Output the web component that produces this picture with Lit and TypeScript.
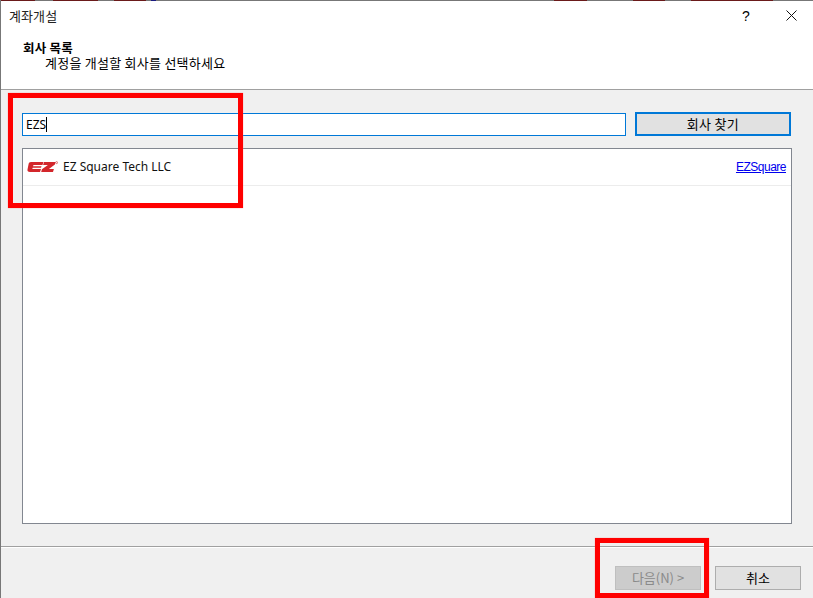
import { LitElement, html, css } from "lit";
import { customElement } from "lit/decorators.js";

@customElement("app-root")
export class AppRoot extends LitElement {
  static styles = css`
    :host { display: block; width: 813px; height: 598px; overflow: hidden; position: relative;
      font-family: "Noto Sans CJK KR", "Noto Sans", sans-serif; font-size: 13px; color: #000; }
    * { box-sizing: border-box; }
    .win { width: 813px; height: 598px; display: flex; flex-direction: column; background: #f0f0f0;
      border-left: 1px solid #777; }
    .edge { height: 1px; flex: none; background: linear-gradient(90deg,
      #6a1a1a 0 34px, #777 34px 52px, #6a1a1a 52px 97px, #777 97px 113px, #6a1a1a 113px 145px, #777 145px 150px,
      #1a1a80 150px 155px, #777 155px 553px, #6a1a1a 553px 586px, #777 586px 632px, #6a1a1a 632px 664px,
      #777 664px 690px, #6a1a1a 690px 772px, #777 772px); }
    .head { height: 89px; background: #fff; border-bottom: 1px solid #a0a0a0; display: flex; flex-direction: column; flex: none; }
    .titlebar { height: 30px; display: flex; align-items: center; padding: 0 0 1px 8px; flex: none; }
    .title { flex: 1; line-height: 28px; color: #222; letter-spacing: 0.1px; }
    .help { width: 46px; text-align: center; font: 14px "Liberation Sans", sans-serif; }
    .close { width: 44px; height: 29px; display: flex; align-items: center; justify-content: center; }
    .htxt { padding: 9px 0 0 22px; letter-spacing: 0.25px; }
    .h1 { font-weight: 700; font-size: 12.5px; line-height: 16px; }
    .h2 { padding-left: 22px; line-height: 14px; }
    .body { flex: 1; display: flex; flex-direction: column; padding: 22px 20px 22px 21px; min-height: 0; }
    .search { display: flex; gap: 9px; height: 24px; flex: none; align-items: center; }
    .input { width: 604px; height: 23px; background: #fff; border: 1px solid #0078d7; padding-left: 3px;
      display: flex; align-items: center; font-family: "Noto Sans", sans-serif; font-size: 12px; }
    .caret { width: 1px; height: 15px; background: #000; }
    .find { width: 156px; height: 24px; background: #e1e1e1; border: 2px solid #0078d7; text-align: center;
      line-height: 19px; font-size: 13px; letter-spacing: 0.3px; }
    .list { width: 770px; height: 376px; margin-top: 12px; background: #fff; border: 1px solid #828790; flex: none; }
    .row { height: 37px; border-bottom: 1px solid #ececec; display: flex; align-items: center; padding: 0 5px 1px 4px; }
    .logo { width: 31px; height: 12px; flex: none; margin-right: 5px; }
    .name { flex: 1; font-family: "Noto Sans", sans-serif; font-size: 12px; color: #111; }
    .link { color: #0000ee; text-decoration: underline; font-family: "Liberation Sans", sans-serif; font-size: 12px; letter-spacing: -0.5px; }
    .foot { height: 52px; flex: none; border-top: 1px solid #a0a0a0; box-shadow: inset 0 1px 0 #fff;
      display: flex; justify-content: flex-end; gap: 14px; padding: 19px 12px 0 0; }
    .btn { width: 86px; height: 24px; border: 1px solid #adadad; background: #e1e1e1; text-align: center;
      line-height: 21px; font-size: 13px; }
    .btn.dis { background: #cccccc; border-color: #bfbfbf; color: #8a8a8a; }
    .mark { position: absolute; border: 5px solid #ff0000; box-shadow: 0 0 1px #ff8080; pointer-events: none; }
    .m1 { left: 8px; top: 93px; width: 235px; height: 115px; }
    .m2 { left: 595px; top: 538px; width: 114px; height: 60px; }
  `;

  render() {
    return html`
      <div class="win">
        <div class="edge"></div>
        <div class="head">
          <div class="titlebar">
            <div class="title">계좌개설</div>
            <div class="help">?</div>
            <div class="close">
              <svg width="11" height="11" viewBox="0 0 11 11"><path d="M.5.5l10 10M10.5.5l-10 10" stroke="#111" stroke-width="1" fill="none"/></svg>
            </div>
          </div>
          <div class="htxt">
            <div class="h1">회사 목록</div>
            <div class="h2">계정을 개설할 회사를 선택하세요</div>
          </div>
        </div>
        <div class="body">
          <div class="search">
            <div class="input"><span>EZS</span><span class="caret"></span></div>
            <div class="find">회사 찾기</div>
          </div>
          <div class="list">
            <div class="row">
              <svg class="logo" viewBox="0 0 31 12">
                <path fill="#d3262b" d="M4 1h12.5l-1 3H6.5L6 5.2h8.5L14 6.8H5.7L5.3 8H14l-1 3H3C1 11 .2 10 .5 8.6L1.5 3.4C1.8 1.8 2.6 1 4 1z"/>
                <path fill="#d3262b" d="M17 1h11.5l-.6 2.6-6 4.4h5l-.9 3H14.2l.7-2.8 6-4.2h-4.8z"/>
                <circle cx="29.6" cy="1.6" r="1" fill="none" stroke="#d3262b" stroke-width=".6"/>
              </svg>
              <span class="name">EZ Square Tech LLC</span>
              <span class="link">EZSquare</span>
            </div>
          </div>
        </div>
        <div class="foot">
          <div class="btn dis">다음(N) &gt;</div>
          <div class="btn">취소</div>
        </div>
      </div>
      <div class="mark m1"></div>
      <div class="mark m2"></div>
    `;
  }
}
